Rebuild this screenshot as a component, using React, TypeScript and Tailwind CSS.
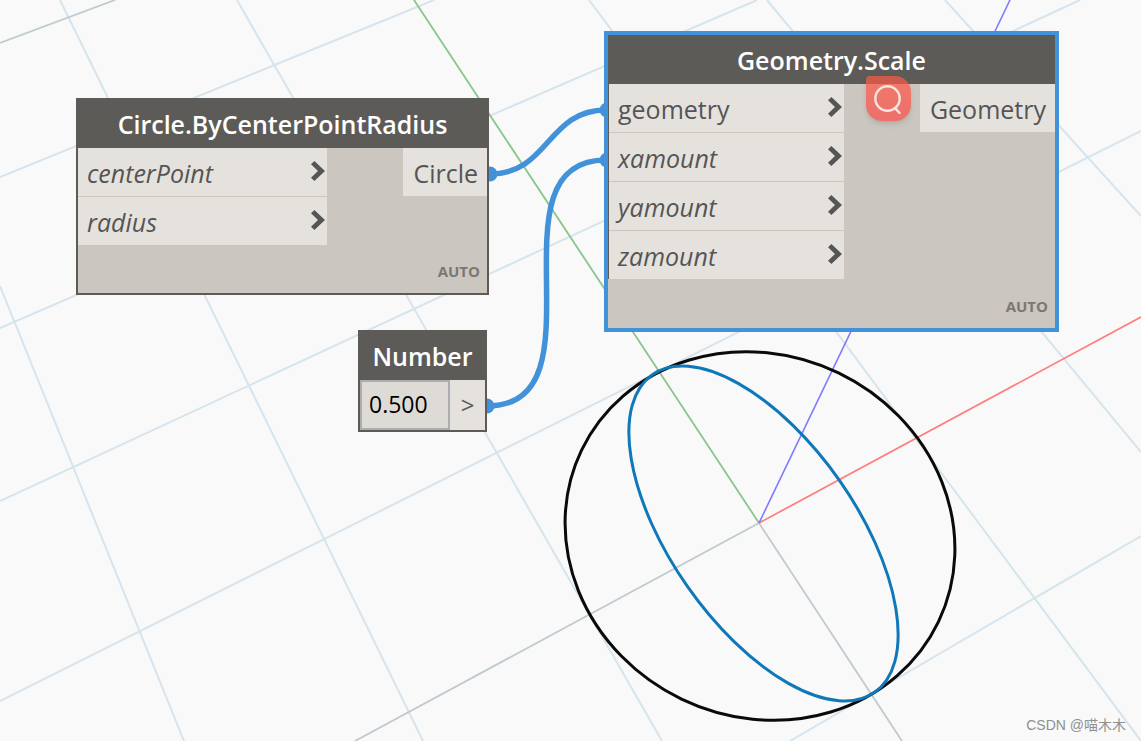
interface Port {
  name: string;
  connected?: boolean;
}

interface NodeCardProps {
  title: string;
  inputs: Port[];
  output: string;
  selected?: boolean;
  inputsClass: string;
  className: string;
}

const GRID_LINES = [
  [0, 177, 434, 0],
  [0, 328, 757, 0],
  [0, 501, 1080, 0],
  [0, 701, 1141, 131],
  [790, 741, 1141, 536],
  [0, 286, 184, 741],
  [60, 0, 423, 741],
  [237, 0, 662, 741],
  [589, 0, 1141, 741],
  [767, 0, 1141, 452],
  [945, 0, 1141, 216],
];

const MAJOR_LINES = [
  [0, 43, 115, 0],
  [355, 741, 759, 523],
  [759, 523, 902, 741],
];

function Background() {
  return (
    <svg
      viewBox="0 0 1141 741"
      preserveAspectRatio="xMidYMid slice"
      className="absolute inset-0 h-full w-full"
      fill="none"
      aria-hidden="true"
    >
      <g stroke="#d6e4ed" strokeWidth="2">
        {GRID_LINES.map(([x1, y1, x2, y2]) => (
          <line key={`${x1}-${y1}`} x1={x1} y1={y1} x2={x2} y2={y2} />
        ))}
      </g>
      <g stroke="#bfcad0" strokeWidth="1.8">
        {MAJOR_LINES.map(([x1, y1, x2, y2]) => (
          <line key={`${x1}-${y1}`} x1={x1} y1={y1} x2={x2} y2={y2} />
        ))}
      </g>
      <line x1="414" y1="0" x2="759" y2="523" stroke="#8ac68a" strokeWidth="1.8" />
      <line x1="759" y1="523" x2="1141" y2="317" stroke="#ff7c7c" strokeWidth="1.7" />
      <line x1="759" y1="523" x2="1010" y2="0" stroke="#7c7cff" strokeWidth="1.6" />
      <ellipse rx="198" ry="181" transform="translate(760 536) rotate(25.7)" stroke="#0a0a0a" strokeWidth="3" />
      <ellipse rx="193.8" ry="92.7" transform="translate(763.5 533.5) rotate(55)" stroke="#0f78b8" strokeWidth="3" />
    </svg>
  );
}

function Wires() {
  return (
    <svg className="absolute inset-0 h-full w-full" fill="none" aria-hidden="true">
      <g stroke="#4292da" strokeWidth="5.5">
        <path d="M490 174C549 174 547 110 606 110" />
        <path d="M487 406C609 406 484 160 606 160" />
      </g>
      <g fill="#4292da">
        <circle cx="490" cy="174" r="7.5" />
        <circle cx="487" cy="406" r="7.5" />
        <circle cx="607" cy="110" r="7.5" />
        <circle cx="607" cy="160" r="7.5" />
      </g>
    </svg>
  );
}

function Chevron() {
  return (
    <svg viewBox="0 0 14 20" className="mb-0.5 h-5 w-3.5 shrink-0" fill="#555555" aria-hidden="true">
      <path d="M0 3.2 3.4 0 14 10 3.4 20 0 16.8 7 10Z" />
    </svg>
  );
}

function NodeCard({ title, inputs, output, selected, inputsClass, className }: NodeCardProps) {
  return (
    <section
      className={`absolute bg-[#cbc6bf] text-[25px] leading-8 text-[#555555] ${
        selected ? "border-4 border-[#4292da]" : "border-2 border-[#5d5b58]"
      } ${className}`}
    >
      <h2
        className={`flex items-center justify-center bg-[#5d5b58] font-semibold text-white ${
          selected ? "h-[49px]" : "h-12"
        }`}
      >
        {title}
      </h2>
      <div className={`flex items-start justify-between ${selected ? "border-l border-[#5d5b58]" : ""}`}>
        <ul className={`flex flex-col gap-px ${inputsClass}`}>
          {inputs.map((port) => (
            <li key={port.name} className="flex h-12 items-center justify-between bg-[#e5e2dd] pr-0.5 pl-[9px]">
              <span className={port.connected ? "pt-0.5" : "pt-0.5 italic"}>{port.name}</span>
              <Chevron />
            </li>
          ))}
        </ul>
        <div className="flex h-12 items-center bg-[#e5e2dd] pt-0.5 pr-[9px] pl-2.5">{output}</div>
      </div>
      <p
        className={`flex items-end justify-end pr-[7px] pb-3 text-[15px] leading-5 font-bold text-[#7b7874] ${
          selected ? "h-[49px]" : "h-12"
        }`}
      >
        AUTO
      </p>
    </section>
  );
}

function NumberNode() {
  return (
    <section className="absolute top-[330px] left-[358px] w-[129px] border-2 border-[#5d5b58] text-[25px] leading-8">
      <h2 className="flex h-12 items-center justify-center bg-[#5d5b58] font-semibold text-white">
        <label htmlFor="number-value">Number</label>
      </h2>
      <div className="flex h-[50px]">
        <input
          id="number-value"
          type="text"
          defaultValue="0.500"
          className="w-[90px] border-2 border-[#abadb3] bg-[#dedbd6] px-[7px] pb-0.5 text-[23px] text-black outline-none"
        />
        <span className="flex flex-1 items-center justify-center bg-[#e5e2dd] text-2xl text-[#5d5b58]">&gt;</span>
      </div>
    </section>
  );
}

export default function App() {
  return (
    <main className="relative min-h-screen overflow-hidden bg-[#f9f9f9] font-['Open_Sans',sans-serif]">
      <Background />
      <Wires />

      <NodeCard
        title="Circle.ByCenterPointRadius"
        inputs={[{ name: "centerPoint" }, { name: "radius" }]}
        output="Circle"
        inputsClass="w-[249px]"
        className="top-[98px] left-[76px] w-[413px]"
      />
      <NumberNode />
      <NodeCard
        title="Geometry.Scale"
        inputs={[{ name: "geometry", connected: true }, { name: "xamount" }, { name: "yamount" }, { name: "zamount" }]}
        output="Geometry"
        selected
        inputsClass="w-[235px]"
        className="top-[31px] left-[604px] w-[455px]"
      />

      <button
        type="button"
        aria-label="Search"
        className="absolute top-[76px] left-[866px] flex size-[45px] items-center justify-center rounded-2xl rounded-tl-sm bg-linear-to-b from-[#ff5a45]/70 to-[#f8524e]/75 shadow-md"
      >
        <svg viewBox="0 0 30 30" className="size-[30px]" fill="none" stroke="#f7e4e1" strokeWidth="2.4" aria-hidden="true">
          <circle cx="13.5" cy="14.5" r="12.2" />
          <path d="m21 24 4.5 5" strokeLinecap="round" />
        </svg>
      </button>

      <p className="absolute right-[15px] bottom-1.5 font-['Liberation_Sans','Noto_Sans_CJK_SC',sans-serif] text-sm text-[#8f8f8f]">
        CSDN @喵木木
      </p>
    </main>
  );
}
